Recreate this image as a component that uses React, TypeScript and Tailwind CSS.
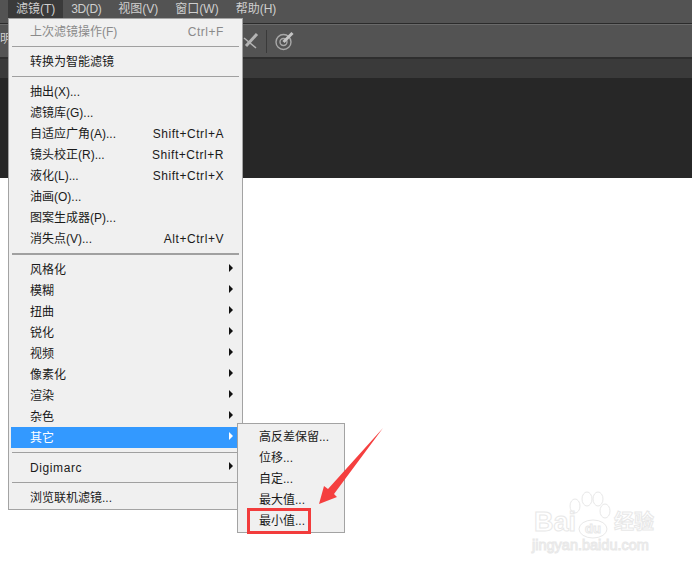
const CJK = "font-['Liberation_Sans','Noto_Sans_CJK_SC',sans-serif]";

type Row = { label: string; shortcut?: string; arrow?: boolean; active?: boolean; disabled?: boolean; wide?: boolean };

const groups: Row[][] = [
  [{ label: "上次滤镜操作(F)", shortcut: "Ctrl+F", disabled: true }],
  [{ label: "转换为智能滤镜" }],
  [
    { label: "抽出(X)..." },
    { label: "滤镜库(G)..." },
    { label: "自适应广角(A)...", shortcut: "Shift+Ctrl+A" },
    { label: "镜头校正(R)...", shortcut: "Shift+Ctrl+R" },
    { label: "液化(L)...", shortcut: "Shift+Ctrl+X" },
    { label: "油画(O)..." },
    { label: "图案生成器(P)..." },
    { label: "消失点(V)...", shortcut: "Alt+Ctrl+V" },
  ],
  [
    { label: "风格化", arrow: true },
    { label: "模糊", arrow: true },
    { label: "扭曲", arrow: true },
    { label: "锐化", arrow: true },
    { label: "视频", arrow: true },
    { label: "像素化", arrow: true },
    { label: "渲染", arrow: true },
    { label: "杂色", arrow: true },
    { label: "其它", arrow: true, active: true },
  ],
  [{ label: "Digimarc", arrow: true, wide: true }],
  [{ label: "浏览联机滤镜..." }],
];

const subItems = ["高反差保留...", "位移...", "自定...", "最大值..."];

const MenuRow = ({ row }: { row: Row }) => {
  let color = "pl-[21px] text-[#1a1a1a]";
  if (row.disabled) color = "pl-[21px] text-[#8a8a8a]";
  if (row.active) color = "ml-[2px] pl-[19px] bg-[#3399ff] text-white";
  return (
    <div className={"flex h-[21px] items-center pr-[18px] " + color}>
      <span className={"flex-1 " + (row.wide ? "tracking-[0.6px]" : "")}>{row.label}</span>
      {row.shortcut && <span className="tracking-[0.55px]">{row.shortcut}</span>}
      {row.arrow && (
        <svg width="4" height="8" viewBox="0 0 4 8" className="-mr-[9px] mb-[4px]">
          <path d="M0 0l4 4-4 4z" fill={row.active ? "#ffffff" : "#111111"} />
        </svg>
      )}
    </div>
  );
};

const FilterMenu = () => {
  return (
    <div className="absolute left-[8px] top-[18px] w-[235px] border border-[#a3a3a3] bg-[#f0f0f0] pt-[2px] pb-[1px]">
      {groups.map((group, i) => (
        <div key={i}>
          {i > 0 && (
            <div className={"mx-[3px] my-[4px] bg-[#a0a0a0] " + (i === 3 ? "h-[2px]" : "h-px")} />
          )}
          {group.map((row) => (
            <MenuRow key={row.label} row={row} />
          ))}
        </div>
      ))}
    </div>
  );
};

const SubMenu = () => {
  return (
    <div className="absolute left-[237px] top-[423px] w-[108px] border border-[#a3a3a3] bg-[#f0f0f0] pt-[2px] pb-[1px]">
      {subItems.map((s) => (
        <div key={s} className="flex h-[21px] items-center pl-[21px] text-[#1a1a1a]">
          {s}
        </div>
      ))}
      <div className="ml-[9px] -mt-[2px] -mb-[3px] flex h-[26px] w-[64px] items-center border-[3px] border-[#f23c3c] pl-[9px] text-[#1a1a1a]">
        最小值...
      </div>
    </div>
  );
};

const Arrow = () => {
  return (
    <svg width="70" height="80" viewBox="0 0 70 80" className="absolute left-[317px] top-[426px]">
      <path d="M66 2 L11 63 L7 60 L2 78 L20 71 L17 68 Z" fill="#f53f3f" />
    </svg>
  );
};

const Watermark = () => {
  return (
    <div className="absolute left-[530px] top-[490px] w-[130px] pt-[19px] pl-[2px] font-bold leading-none text-transparent [-webkit-text-stroke:1px_#e8e8e8]">
      <svg width="50" height="55" viewBox="0 0 50 55" className="absolute left-[35px] top-0" fill="none" stroke="#e8e8e8">
        <ellipse cx="10" cy="16" rx="5" ry="7" />
        <ellipse cx="22" cy="9" rx="5" ry="7" />
        <ellipse cx="33" cy="9" rx="5" ry="7" />
        <ellipse cx="40" cy="21" rx="5" ry="7" />
        <ellipse cx="28" cy="39" rx="14" ry="9" />
      </svg>
      <div className="flex items-end pl-[2px]">
        <span className="text-[27px]">Bai</span>
        <span className="ml-[9px] mb-[1px] text-[13px]">du</span>
        <span className="ml-[13px] mb-[4px] text-[20px]">经验</span>
      </div>
      <div className="mt-[2px] text-[14.5px] font-normal">jingyan.baidu.com</div>
    </div>
  );
};

const PenIcon = () => {
  return (
    <svg width="18" height="18" viewBox="0 0 18 18" fill="none" stroke="#b4b4b4">
      <path d="M14 2L3 14" strokeWidth="3" />
      <path d="M1 6L13 16" strokeWidth="1.5" />
    </svg>
  );
};

const TargetIcon = () => {
  return (
    <svg width="20" height="20" viewBox="0 0 20 20" fill="none" stroke="#a8a8a8" strokeWidth="1.4">
      <circle cx="8.5" cy="11" r="7.5" />
      <circle cx="8.5" cy="11" r="3.5" />
      <path d="M8.5 11L17.5 2" strokeWidth="3" stroke="#c4c4c4" />
    </svg>
  );
};

export default function App() {
  return (
    <div className={"relative h-[567px] w-[692px] overflow-hidden bg-white text-[12px] leading-none " + CJK}>
      <div className="flex h-[23px] items-start gap-[17px] bg-[#535353] pl-[8px] text-[#cfcfcf]">
        <span className="-mr-[9px] flex h-[18px] items-center bg-[#3a3a3a] px-[8px]">滤镜(T)</span>
        <span className="flex h-[18px] items-center tracking-[-0.4px]">3D(D)</span>
        <span className="flex h-[18px] items-center">视图(V)</span>
        <span className="flex h-[18px] items-center">窗口(W)</span>
        <span className="flex h-[18px] items-center">帮助(H)</span>
      </div>
      <div className="h-px bg-[#2b2b2b]" />
      <div className="h-px bg-[#6a6a6a]" />
      <div className="flex h-[32px] items-center bg-[#535353]">
        <span className="mb-[4px] w-[243px] text-[#d0d0d0]">明</span>
        <PenIcon />
        <div className="ml-[5px] mr-[8px] h-[23px] w-px bg-[#3a3a3a]" />
        <TargetIcon />
      </div>
      <div className="h-[2px] bg-[#2e2e2e]" />
      <div className="h-[19px] bg-[#3a3a3a]" />
      <div className="h-[100px] bg-[#272727]" />
      <FilterMenu />
      <SubMenu />
      <Arrow />
      <Watermark />
    </div>
  );
}
